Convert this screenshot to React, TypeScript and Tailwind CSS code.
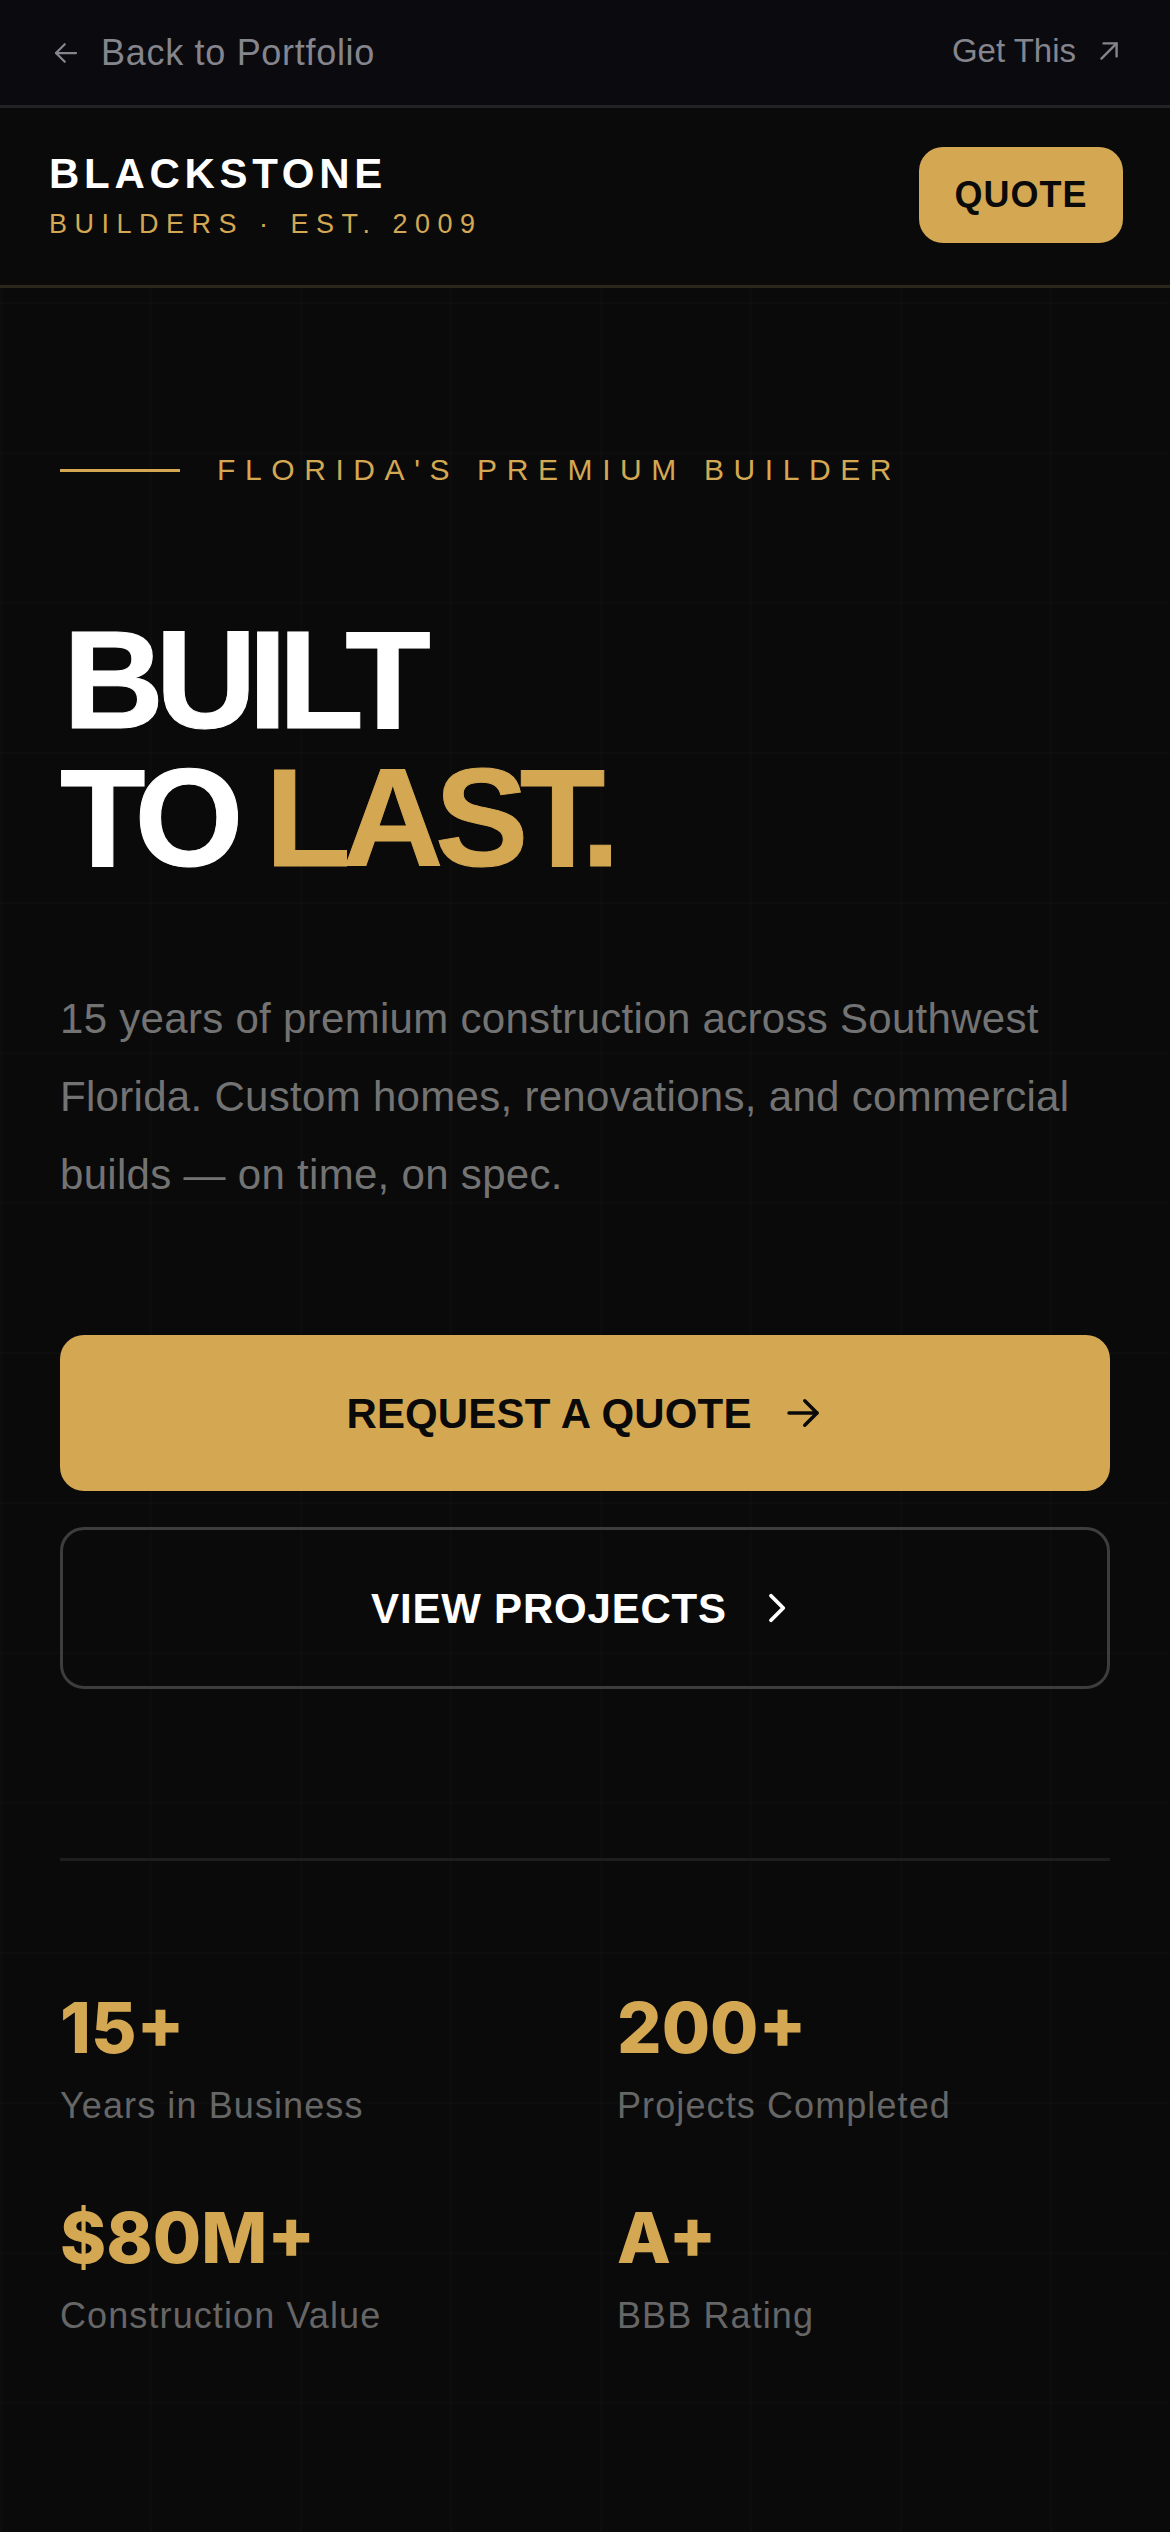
import React from "react";

const sans = "[font-family:'Liberation_Sans',Arial,sans-serif]";

function Stat({ value, label }: { value: string; label: string }) {
  return (
    <div className="flex flex-col">
      <div className="[font-family:Inter,sans-serif] text-[70px] leading-[78px] font-extrabold text-[#d4a853]">{value}</div>
      <div className="mt-[12px] text-[36px] leading-[54px] tracking-[1.1px] text-[#666666]">{label}</div>
    </div>
  );
}

export default function App() {
  return (
    <div className={`${sans} w-[1170px] min-h-[2532px] bg-[#0a0a0a] bg-[linear-gradient(rgba(255,255,255,0.011)_2px,transparent_2px),linear-gradient(90deg,rgba(255,255,255,0.011)_2px,transparent_2px)] bg-[size:150px_150px] bg-[position:0_2px] text-white`}>
      <div className="flex h-[108px] items-center justify-between border-b-[3px] border-[#222226] bg-[#0a0a0f] pl-[51px] pr-[48px]">
        <div className="flex items-center gap-[20px] text-[#85858d]">
          <svg width="30" height="30" viewBox="0 0 24 24" fill="none" stroke="currentColor" strokeWidth="1.8" strokeLinecap="round" strokeLinejoin="round"><path d="M20 12H4" /><path d="M11 19l-7-7 7-7" /></svg>
          <span className="text-[36px] leading-[54px] tracking-[0.7px]">Back to Portfolio</span>
        </div>
        <div className="flex -translate-y-[2px] items-center gap-[20px] text-[#85858d]">
          <span className="text-[33px] leading-[48px]">Get This</span>
          <svg width="26" height="26" viewBox="0 0 24 24" fill="none" stroke="currentColor" strokeWidth="2.2" strokeLinecap="round" strokeLinejoin="round"><path d="M5 19L19 5" /><path d="M7 5h12v12" /></svg>
        </div>
      </div>
      <div className="flex h-[180px] items-center justify-between border-b-[3px] border-[#2a2619] bg-[#0a0a0a] pl-[49px] pr-[47px]">
        <div className="flex -translate-y-[1px] flex-col">
          <div className="text-[42px] leading-[50px] font-bold tracking-[4.7px]">BLACKSTONE</div>
          <div className="mt-[7px] text-[27px] leading-[36px] tracking-[7.5px] text-[#d4a853]">BUILDERS · EST. 2009</div>
        </div>
        <div className="flex h-[96px] w-[204px] -translate-y-[2px] items-center justify-center rounded-[24px] bg-[#d4a853] text-[36px] font-bold tracking-[1px] text-[#0a0a0a]">QUOTE</div>
      </div>
      <div className="px-[60px]">
        <div className="mt-[162px] flex items-center gap-[37px]">
          <div className="h-[3px] w-[120px] bg-[#d4a853]" />
          <div className="text-[30px] leading-[40px] tracking-[9.6px] text-[#d4a853]">FLORIDA'S PREMIUM BUILDER</div>
        </div>
        <h1 className="mt-[121px] text-[140px] leading-[138px] font-bold tracking-[-8.5px] [-webkit-text-stroke:1px_currentColor]">
          <div className="pl-[3px]">BUILT</div>
          <div>TO <span className="text-[#d4a853]">LAST.</span></div>
        </h1>
        <p className="mt-[93px] text-[42px] leading-[78px] tracking-[0.3px] text-[#737373]">
          15 years of premium construction across Southwest Florida. Custom homes, renovations, and commercial builds — on time, on spec.
        </p>
        <div className="mt-[121px] flex h-[156px] items-center justify-center gap-[30px] rounded-[24px] bg-[#d4a853] text-[42px] font-bold tracking-[0.15px] text-[#0a0a0a]">
          <span>REQUEST A QUOTE</span>
          <svg width="42" height="42" viewBox="0 0 24 24" fill="none" stroke="currentColor" strokeWidth="2" strokeLinecap="round" strokeLinejoin="round"><path d="M4 12h16" /><path d="M13 5l7 7-7 7" /></svg>
        </div>
        <div className="mt-[36px] flex h-[162px] items-center justify-center gap-[30px] rounded-[24px] border-[3px] border-[#3d3d3d] text-[42px] font-bold tracking-[0.8px]">
          <span>VIEW PROJECTS</span>
          <svg width="42" height="42" viewBox="0 0 24 24" fill="none" stroke="currentColor" strokeWidth="2.2" strokeLinecap="round" strokeLinejoin="round"><path d="M8 5l7 7-7 7" /></svg>
        </div>
        <div className="mt-[169px] h-[3px] bg-[#1e1e1e]" />
        <div className="mt-[128px] grid grid-cols-2 gap-x-[64px] gap-y-[66px]">
          <Stat value="15+" label="Years in Business" />
          <Stat value="200+" label="Projects Completed" />
          <Stat value="$80M+" label="Construction Value" />
          <Stat value="A+" label="BBB Rating" />
        </div>
      </div>
    </div>
  );
}
